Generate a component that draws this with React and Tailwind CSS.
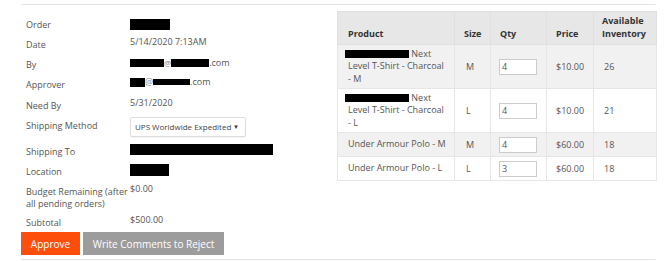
import React from 'react';

const Redact = ({ w, h = 'h-[11px]' }) => <span className={`inline-block bg-black align-middle ${w} ${h}`} />;

const Row = ({ label, children, className = 'h-[20px]' }) => (
  <div className={`flex ${className}`}>
    <div className="w-[104px] shrink-0 leading-[12px] pt-[4px]">{label}</div>
    <div className="flex-1 leading-[12px] pt-[1px]">{children}</div>
  </div>
);

const rows = [
  { first: 'Next', rest: ['Level T-Shirt - Charcoal', '- M'], size: 'M', qty: '4', price: '$10.00', inv: '26', tall: true },
  { first: 'Next', rest: ['Level T-Shirt - Charcoal', '- L'], size: 'L', qty: '4', price: '$10.00', inv: '21', tall: true },
  { name: 'Under Armour Polo - M', size: 'M', qty: '4', price: '$60.00', inv: '18' },
  { name: 'Under Armour Polo - L', size: 'L', qty: '3', price: '$60.00', inv: '18' },
];

export default function App() {
  return (
    <div className="w-[670px] h-[261px] bg-white text-[#555] text-[9px] overflow-hidden" style={{ fontFamily: '"Open Sans", sans-serif' }}>
      <div className="ml-[21px] w-[634px] mt-[4px] border-t border-[#e3e3e3]" />
      <div className="flex ml-[21px] w-[636px]">
        <div className="w-[317px] pl-[5px] pt-[10px]">
          <Row label="Order"><span className="inline-block mt-[2px]"><Redact w="w-[40px]" /></span></Row>
          <Row label="Date">5/14/2020 7:13AM</Row>
          <Row label="By">
            <span className="inline-flex items-center mt-[1px]">
              <Redact w="w-[34px]" h="h-[8px]" />
              <span className="text-[8px] text-[#888]">@</span>
              <Redact w="w-[38px]" h="h-[8px]" />
              <span>.com</span>
            </span>
          </Row>
          <Row label="Approver" className="h-[21px]">
            <span className="inline-flex items-center">
              <Redact w="w-[15px]" h="h-[9px]" />
              <span className="text-[9px] text-[#888]">@</span>
              <Redact w="w-[37px]" h="h-[6px]" />
              <span>.com</span>
            </span>
          </Row>
          <Row label="Need By">5/31/2020</Row>
          <Row label="Shipping Method" className="h-[26px]">
            <div className="w-[116px] h-[20px] border border-[#ddd] rounded-[2px] flex items-center pl-[4px] pr-[6px] text-[8px] text-[#444] whitespace-nowrap shadow-[0_1px_1px_rgba(0,0,0,0.05)]">
              <span>UPS Worldwide Expedited</span>
              <span className="ml-auto text-[6px] text-[#333]">▼</span>
            </div>
          </Row>
          <Row label="Shipping To"><span className="inline-block -mt-[1px]"><Redact w="w-[143px]" /></span></Row>
          <Row label="Location"><span className="inline-block"><Redact w="w-[39px]" h="h-[12px]" /></span></Row>
          <Row label="Budget Remaining (after all pending orders)" className="h-[31px]">$0.00</Row>
          <Row label="Subtotal" className="h-[19px]">$500.00</Row>
          <div className="flex gap-[3px] -ml-[5px] text-[10px] text-white">
            <button className="w-[59px] h-[23px] bg-[#fe4e0c] leading-none">Approve</button>
            <button className="w-[141px] h-[23px] bg-[#9c9c9c] leading-none">Write Comments to Reject</button>
          </div>
        </div>
        <div className="pt-[6px]">
          <table className="w-[319px] border-collapse table-fixed">
            <colgroup>
              <col className="w-[117px]" />
              <col className="w-[36px]" />
              <col className="w-[56px]" />
              <col className="w-[47px]" />
              <col className="w-[63px]" />
            </colgroup>
            <thead>
              <tr className="bg-[#e7e7e7] h-[33px] text-[#333] font-bold text-left">
                <th className="border border-[#e0e0e0] pl-[10px] align-bottom pb-[4px]">Product</th>
                <th className="border border-[#e0e0e0] pl-[9px] align-bottom pb-[4px]">Size</th>
                <th className="border border-[#e0e0e0] pl-[9px] align-bottom pb-[4px]">Qty</th>
                <th className="border border-[#e0e0e0] pl-[9px] align-bottom pb-[4px]">Price</th>
                <th className="border border-[#e0e0e0] pl-[8px] align-bottom pb-[4px] leading-[13px]">Available Inventory</th>
              </tr>
            </thead>
            <tbody>
              {rows.map((r, i) => (
                <tr key={i} className={`${i % 2 === 0 ? 'bg-[#f1f1f1]' : 'bg-white'} ${r.tall ? 'h-[44px]' : 'h-[24px]'}`}>
                  <td className="border border-[#e6e6e6] pl-[7px] pr-[2px] leading-[12.5px]">
                    {r.tall ? (
                      <div>
                        <span className="inline-block bg-black h-[8px] w-[64px] align-middle" /> {r.first}
                        <div className="ml-[3px]">{r.rest[0]}</div>
                        <div className="ml-[3px]">{r.rest[1]}</div>
                      </div>
                    ) : <span className="ml-[3px]">{r.name}</span>}
                  </td>
                  <td className="border border-[#e6e6e6] pl-[11px]">{r.size}</td>
                  <td className="border border-[#e6e6e6] pl-[8px]">
                    <div className="w-[38px] h-[16px] border border-[#ccc] bg-white pl-[2px] leading-[14px] text-[#555]">{r.qty}</div>
                  </td>
                  <td className="border border-[#e6e6e6] pl-[9px]">{r.price}</td>
                  <td className="border border-[#e6e6e6] pl-[10px]">{r.inv}</td>
                </tr>
              ))}
            </tbody>
          </table>
        </div>
      </div>
      <div className="ml-[21px] w-[634px] border-t border-[#e3e3e3] mt-[4px]" />
    </div>
  );
}
